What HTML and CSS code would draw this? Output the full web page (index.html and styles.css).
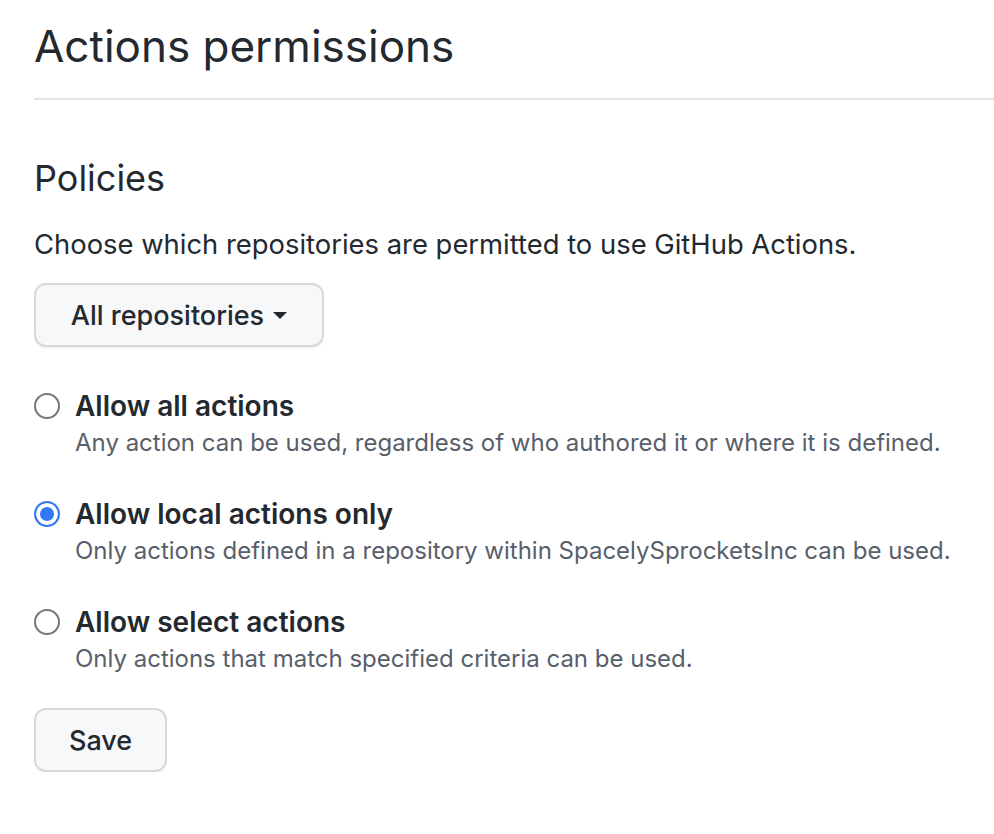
FILE: index.html
```html
<!DOCTYPE html>
<html lang="en">
<head>
<meta charset="utf-8">
<title>Actions permissions</title>
<link rel="stylesheet" href="styles.css">
</head>
<body>
<main class="page">
  <div class="subhead">
    <h2 class="subhead-title">Actions permissions</h2>
  </div>
  <section class="policies">
    <h3 class="section-title">Policies</h3>
    <p class="section-lead">Choose which repositories are permitted to use GitHub Actions.</p>
    <button class="btn btn-select" type="button">All repositories <span class="caret"></span></button>
    <div class="options">
      <label class="option">
        <span class="radio"></span>
        <span class="option-body">
          <span class="option-title">Allow all actions</span>
          <span class="option-note">Any action can be used, regardless of who authored it or where it is defined.</span>
        </span>
      </label>
      <label class="option">
        <span class="radio radio-checked"></span>
        <span class="option-body">
          <span class="option-title">Allow local actions only</span>
          <span class="option-note">Only actions defined in a repository within SpacelySprocketsInc can be used.</span>
        </span>
      </label>
      <label class="option">
        <span class="radio"></span>
        <span class="option-body">
          <span class="option-title">Allow select actions</span>
          <span class="option-note">Only actions that match specified criteria can be used.</span>
        </span>
      </label>
    </div>
    <button class="btn btn-save" type="button">Save</button>
  </section>
</main>
</body>
</html>
```

FILE: styles.css
```css
* { box-sizing: border-box; }
html, body { margin: 0; padding: 0; background: #ffffff; }
body {
  font-family: Inter, "Liberation Sans", Arial, sans-serif;
  color: #24292f;
}
.page {
  padding: 10px 0 0 34px;
}
.subhead {
  padding-bottom: 16px;
  border-bottom: 2px solid #e1e4e8;
}
.subhead-title {
  margin: 0;
  font-size: 44px;
  font-weight: 400;
  line-height: 72px;
}
.policies {
  padding-top: 51px;
}
.section-title {
  margin: 0;
  font-size: 36px;
  font-weight: 400;
  line-height: 54px;
}
.section-lead {
  margin: 18px 0 0;
  font-size: 27.4px;
  line-height: 42px;
}
.btn {
  display: inline-flex;
  align-items: center;
  justify-content: center;
  gap: 9px;
  height: 64px;
  padding: 0 33px;
  margin: 0;
  font-family: inherit;
  font-size: 27px;
  font-weight: 500;
  white-space: nowrap;
  color: #24292f;
  background: #f6f8fa;
  border: 2px solid #d5d8dc;
  border-radius: 12px;
  box-shadow: 0 2px 0 rgba(27, 31, 36, 0.04);
}
.btn-select {
  margin-top: 18px;
  min-width: 290px;
}
.caret {
  width: 0;
  height: 0;
  border-left: 7.5px solid transparent;
  border-right: 7.5px solid transparent;
  border-top: 7px solid #24292f;
}
.options {
  display: flex;
  flex-direction: column;
  gap: 35px;
  padding-top: 41px;
}
.option {
  display: flex;
  align-items: flex-start;
  gap: 15px;
}
.radio {
  flex: none;
  width: 26px;
  height: 26px;
  margin-top: 5px;
  border-radius: 50%;
  border: 2px solid #767676;
  background: #fff;
}
.radio-checked {
  border-color: #3478f6;
  background: #3478f6;
  box-shadow: inset 0 0 0 4px #fff;
}
.option-body {
  display: flex;
  flex-direction: column;
}
.option-title {
  font-size: 28px;
  font-weight: 600;
  line-height: 36px;
}
.option-note {
  font-size: 24px;
  line-height: 36px;
  margin-top: 1px;
  color: #57606a;
}
.btn-save {
  margin-top: 31px;
  min-width: 131px;
}
```
